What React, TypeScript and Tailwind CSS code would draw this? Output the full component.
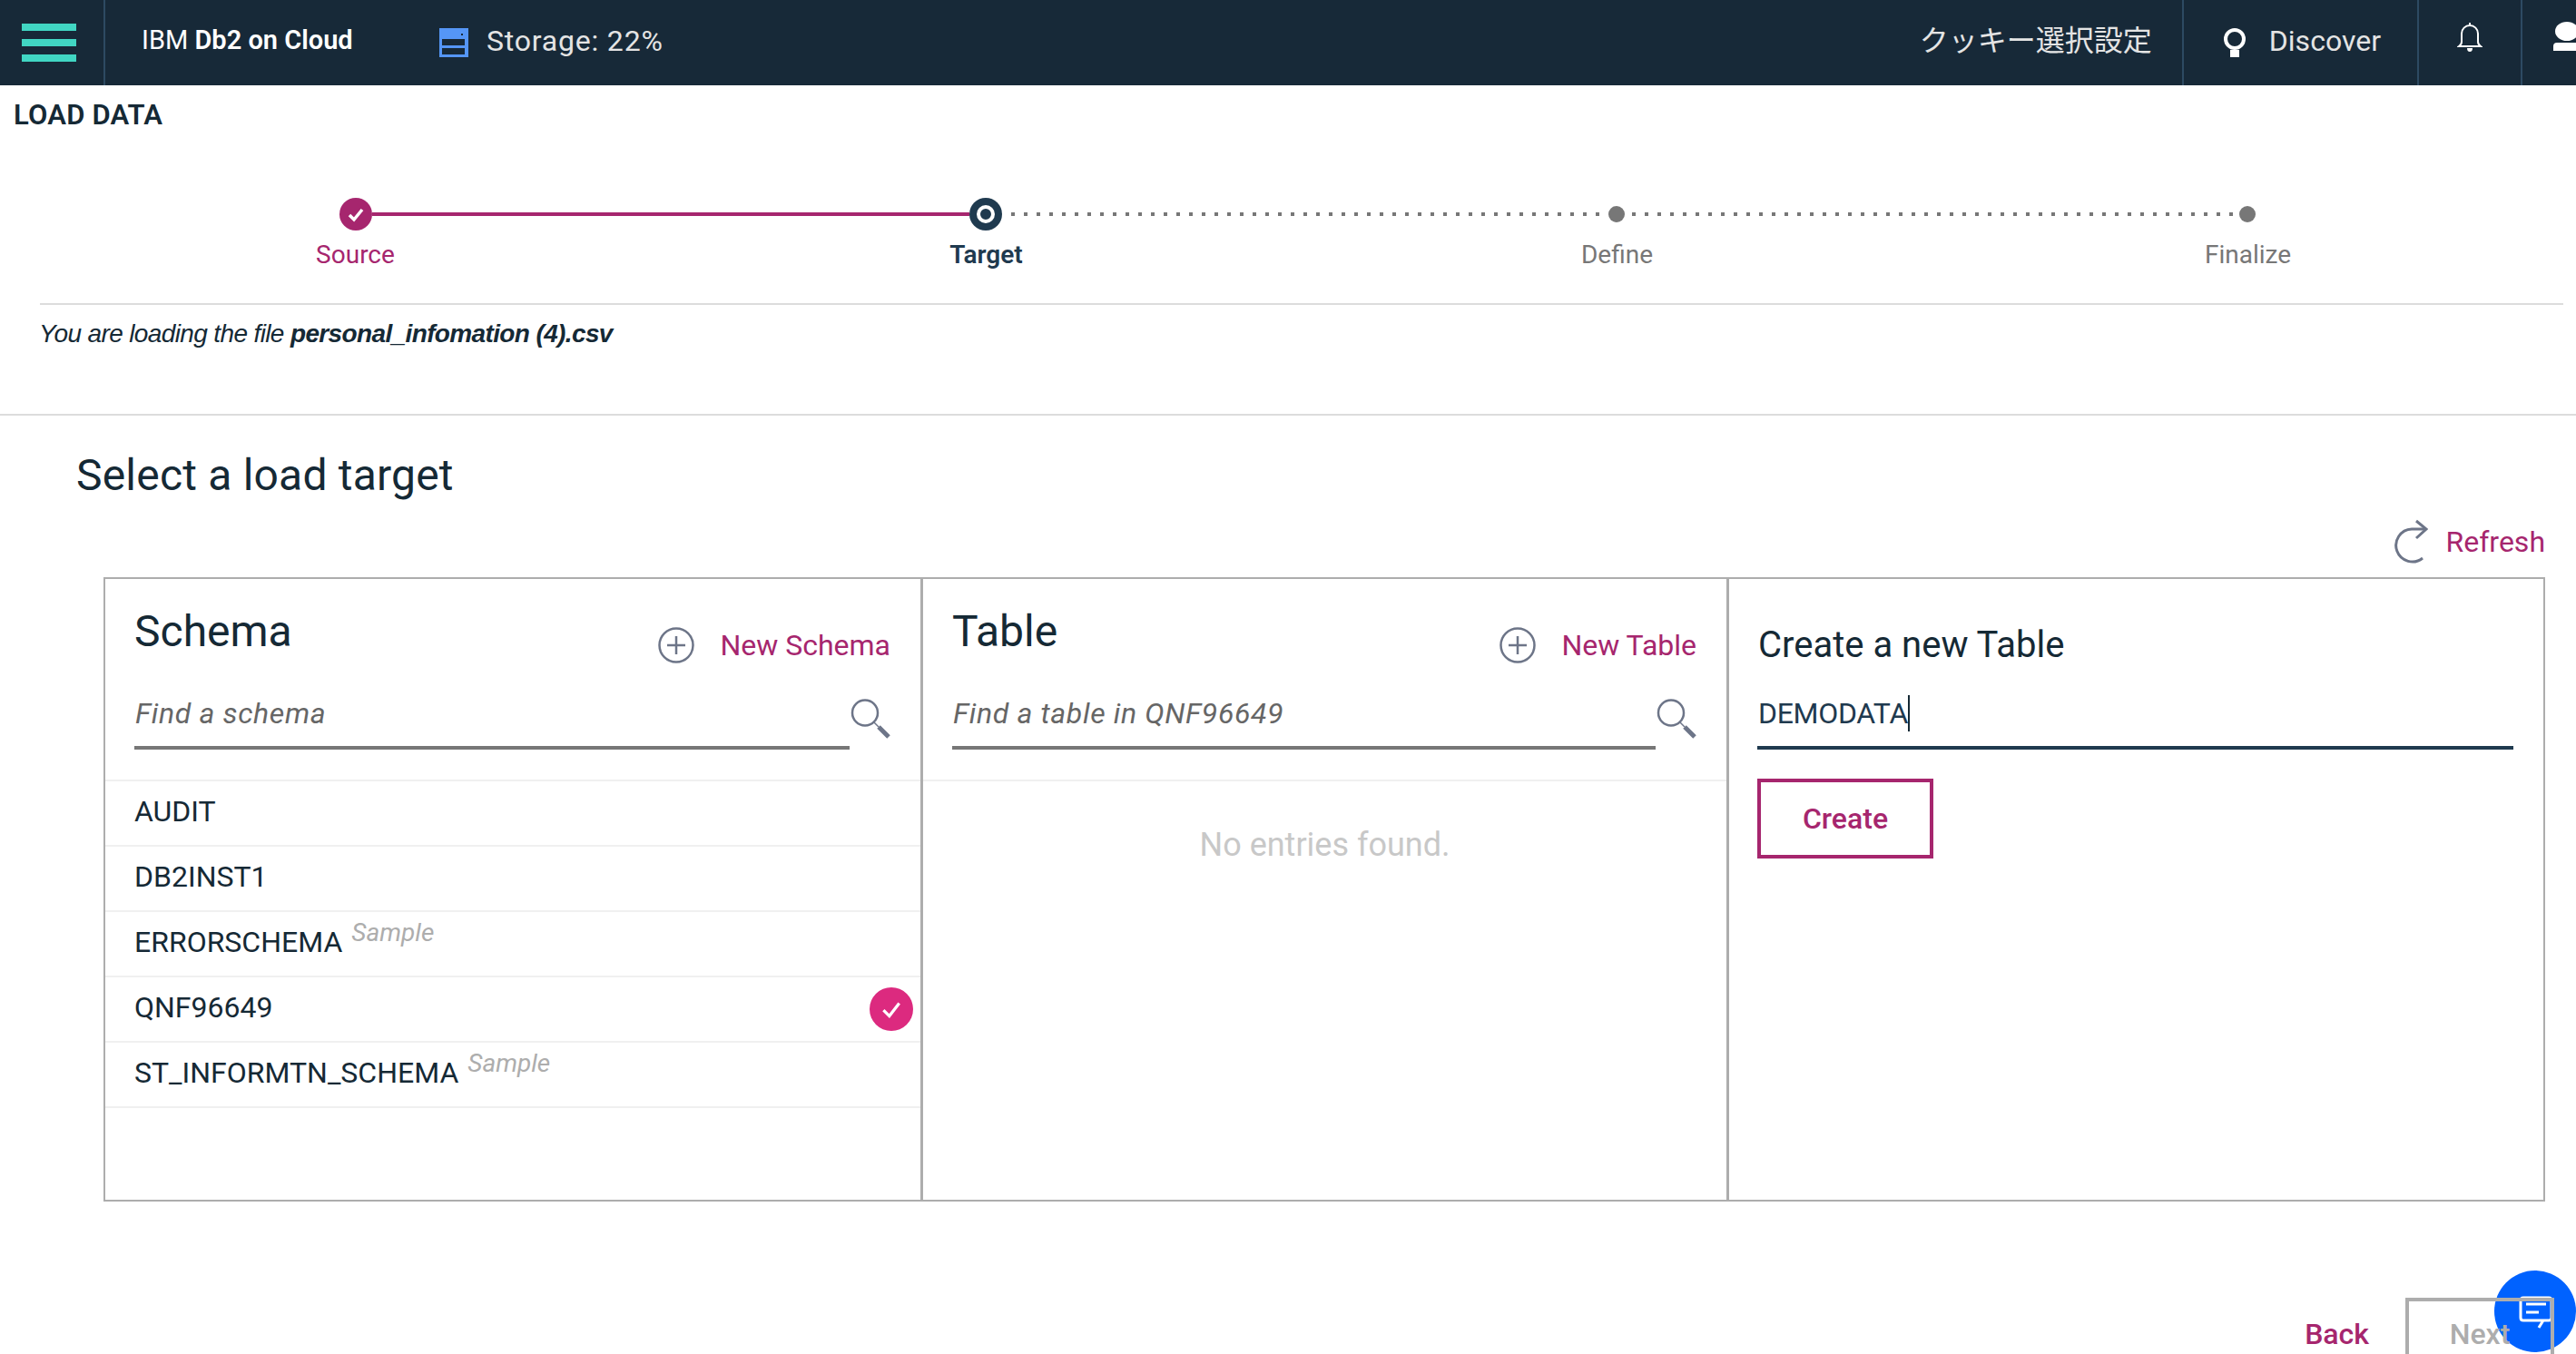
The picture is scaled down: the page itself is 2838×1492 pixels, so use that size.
import React from "react";

const plex = "font-['Roboto','Noto_Sans_CJK_JP',sans-serif]";

function PlusCircle() {
  return (
    <svg viewBox="0 0 40 40" className="w-[40px] h-[40px] shrink-0" fill="none" stroke="#6d7588" strokeWidth="2.5">
      <circle cx="20" cy="20" r="18.5" />
      <path d="M20 10v20M10 20h20" />
    </svg>
  );
}

function SearchIcon() {
  return (
    <svg viewBox="0 0 44 44" className="w-[44px] h-[44px] shrink-0" fill="none" stroke="#6d7588">
      <circle cx="16" cy="15.5" r="14" strokeWidth="2.5" />
      <path d="M26 26l5 5" strokeWidth="1.5" />
      <path d="M31 31l11 11" strokeWidth="5" />
    </svg>
  );
}

function Panel({ title, action, placeholder, children, className }: { title: string; action: string; placeholder: string; children: React.ReactNode; className: string }) {
  return (
    <div className={className}>
      <div className="h-[223px] pl-[32px] pr-[33px] pt-[28px] border-b-2 border-[#f0f0f0]">
        <div className="flex items-start justify-between">
          <div className="text-[48px] leading-[60px] text-[#152935]">{title}</div>
          <div className="flex items-center gap-[28px] mt-[21px] text-[32px] text-[#a6266e]">
            <PlusCircle />
            {action}
          </div>
        </div>
        <div className="flex items-start mt-[15px]">
          <input
            readOnly
            placeholder={placeholder}
            className="flex-1 min-w-0 h-[76px] pl-[1px] border-b-4 border-[#777] bg-transparent outline-none italic text-[32px] tracking-[0.65px] placeholder:text-[#666]"
          />
          <div className="ml-[1px] mt-[20px]">
            <SearchIcon />
          </div>
        </div>
      </div>
      {children}
    </div>
  );
}

const rows = [
  { name: "AUDIT" },
  { name: "DB2INST1" },
  { name: "ERRORSCHEMA", sample: true },
  { name: "QNF96649", checked: true },
  { name: "ST_INFORMTN_SCHEMA", sample: true },
];

export default function App() {
  return (
    <div className={`${plex} relative w-[2838px] h-[1492px] overflow-hidden bg-white text-[#152935]`}>
      <header className="flex items-center h-[94px] bg-[#172938] text-[#e4e4e4]">
        <div className="flex flex-col justify-center gap-[9px] w-[116px] h-full pl-[24px] border-r-2 border-[#2d4a62]">
          <span className="block w-[60px] h-[8px] bg-[#41d6c3]" />
          <span className="block w-[60px] h-[8px] bg-[#41d6c3]" />
          <span className="block w-[60px] h-[8px] bg-[#41d6c3]" />
        </div>
        <div className="ml-[40px] w-[328px] text-[29px] text-white -translate-y-[2px]">
          IBM <span className="font-semibold">Db2 on Cloud</span>
        </div>
        <svg viewBox="0 0 32 32" className="w-[32px] h-[32px]">
          <rect width="32" height="32" fill="#5596f6" />
          <rect x="3" y="12" width="25" height="7" fill="#172938" />
          <rect x="3" y="22" width="25" height="7" fill="#172938" />
          <rect x="24" y="6" width="2" height="2" fill="#172938" />
        </svg>
        <div className="ml-[20px] text-[32px] tracking-[0.8px] -translate-y-[2px]">Storage: 22%</div>
        <div className="ml-auto text-[32px] -translate-y-[2px]">クッキー選択設定</div>
        <div className="flex items-center h-full ml-[33px] pl-[44px] pr-[40px] border-l-2 border-[#2d4a62]">
          <svg viewBox="0 0 24 32" className="w-[24px] h-[32px] mr-[26px]">
            <circle cx="12" cy="12" r="10" fill="none" stroke="#fff" strokeWidth="4" />
            <rect x="7" y="24" width="10" height="8" fill="#fff" />
          </svg>
          <span className="text-[32px] -translate-y-[2px]">Discover</span>
        </div>
        <div className="flex items-center justify-center h-full w-[114px] border-l-2 border-[#2d4a62]">
          <svg viewBox="0 0 28 34" className="w-[28px] h-[34px] -translate-y-[6px]" fill="none" stroke="#fff" strokeWidth="2">
            <path d="M14 1v3M5 22V13a9 9 0 0 1 18 0v9q0 3 3 5H2q3-2 3-5z" />
            <path d="M11 29h6q0 4-3 4t-3-4z" fill="#fff" stroke="none" />
          </svg>
        </div>
        <div className="flex items-start h-full w-[61px] pl-[34px] pt-[24px] border-l-2 border-[#2d4a62] overflow-hidden">
          <svg viewBox="0 0 32 32" className="w-[32px] h-[32px] shrink-0" fill="#fff">
            <ellipse cx="15" cy="10.5" rx="13" ry="10.5" />
            <path d="M0 32v-5q0-4 4-4h24q4 0 4 4v5z" />
          </svg>
        </div>
      </header>

      <h1 className="pl-[15px] pt-[15px] text-[31px] leading-[36px] font-semibold tracking-[0.2px]">LOAD DATA</h1>

      <div className="pl-[44px] pr-[14px] mt-[73px]">
        <div className="flex items-center pl-[330px] h-[36px]">
          <div className="flex items-center justify-center w-[36px] h-[36px] rounded-full bg-[#a6266e] shrink-0">
            <svg viewBox="0 0 20 20" className="w-[20px] h-[20px]" fill="none" stroke="#fff" strokeWidth="3.5">
              <path d="M3 11l5 5 9-11" />
            </svg>
          </div>
          <div className="w-[658px] h-[4px] bg-[#a6266e] shrink-0" />
          <div className="flex items-center justify-center w-[36px] h-[36px] rounded-full bg-[#1f3a4f] shrink-0">
            <span className="block w-[20px] h-[20px] rounded-full border-[4px] border-white bg-[#1f3a4f]" />
          </div>
          <div className="w-[648px] h-[4px] ml-[10px] mr-[10px] shrink-0 bg-[repeating-linear-gradient(90deg,#777_0_4px,transparent_4px_14px)]" />
          <span className="w-[18px] h-[18px] rounded-full bg-[#777] shrink-0" />
          <div className="w-[663px] h-[4px] ml-[8px] mr-[6px] shrink-0 bg-[repeating-linear-gradient(90deg,#777_0_4px,transparent_4px_14px)]" />
          <span className="w-[18px] h-[18px] rounded-full bg-[#777] shrink-0" />
        </div>
        <div className="grid grid-cols-4 mt-[7px] text-[28px] leading-[40px] text-center">
          <span className="text-[#a6266e]">Source</span>
          <span className="font-semibold text-[#1f3a4f]">Target</span>
          <span className="text-[#777]">Define</span>
          <span className="text-[#777]">Finalize</span>
        </div>
        <div className="h-[2px] bg-[#dcdcdc] mt-[33px]" />
        <p className="mt-[14px] -ml-[1px] font-['Liberation_Sans',sans-serif] italic text-[28px] leading-[36px] tracking-[-0.63px]">
          You are loading the file <b>personal_infomation (4).csv</b>
        </p>
      </div>

      <div className="h-[2px] bg-[#dcdcdc] mt-[70px]" />
      <h2 className="pl-[84px] mt-[36px] text-[48px] leading-[60px] tracking-[0.2px]">Select a load target</h2>

      <div className="flex items-center justify-end pr-[34px] h-[50px] mt-[18px] text-[32px] text-[#a6266e]">
        <svg viewBox="0 0 38 50" className="w-[38px] h-[50px] mr-[20px]" fill="none" stroke="#6d7588" strokeWidth="3">
          <path d="M36 11H20A18 18 0 1 0 32 43" />
          <path d="M25 2l11 9-11 10" />
        </svg>
        Refresh
      </div>

      <div className="flex ml-[114px] w-[2690px] h-[688px] mt-[14px] border-2 border-[#adadad]">
        <Panel title="Schema" action="New Schema" placeholder="Find a schema" className="w-[901px] border-r-[3px] border-[#adadad]">
          <div className="text-[32px]">
            {rows.map((r) => (
              <div key={r.name} className="flex items-center h-[72px] pl-[32px] pr-[8px] border-b-2 border-[#f0f0f0]">
                <span className="-translate-y-[2px]">{r.name}</span>
                {r.sample && <span className="ml-[10px] -translate-y-[12px] italic text-[28px] text-[#adadad]">Sample</span>}
                {r.checked && (
                  <span className="ml-auto flex items-center justify-center w-[48px] h-[48px] rounded-full bg-[#dc2a7f]">
                    <svg viewBox="0 0 24 24" className="w-[26px] h-[26px]" fill="none" stroke="#fff" strokeWidth="3">
                      <path d="M4 13l6 6L20 6" />
                    </svg>
                  </span>
                )}
              </div>
            ))}
          </div>
        </Panel>
        <Panel title="Table" action="New Table" placeholder="Find a table in QNF96649" className="w-[888px] border-r-[3px] border-[#adadad]">
          <div className="pt-[43px] text-center text-[36px] text-[#c8c8c8]">No entries found.</div>
        </Panel>
        <div className="flex-1 pl-[31px] pr-[33px] pt-[43px]">
          <div className="text-[40px] leading-[60px] pl-[1px]">Create a new Table</div>
          <div className="flex items-center h-[76px] mt-[9px] pl-[1px] border-b-4 border-[#1f3a4f] text-[32px] tracking-[-0.3px] text-[#1f3a4f]">
            DEMODATA
            <span className="block w-[2px] h-[40px] bg-[#152935]" />
          </div>
          <button className="block w-[194px] h-[88px] mt-[32px] border-4 border-[#a6266e] text-[32px] font-medium text-[#a6266e]">Create</button>
        </div>
      </div>

      <div className="absolute right-0 top-[1400px] w-[90px] h-[90px] rounded-full bg-[#0062ff]">
        <svg viewBox="0 0 38 36" className="absolute left-[27px] top-[28px] w-[38px] h-[36px]" fill="none" stroke="#fff" strokeWidth="3">
          <path d="M27 27H5q-3 0-3-3V5q0-3 3-3h28q3 0 3 3v19q0 3-3 3h-6l-5 8" />
          <path d="M8 9h22M8 18h14" />
        </svg>
      </div>

      <div className="relative flex items-center justify-end h-[80px] mt-[106px] pr-[24px] text-[32px] font-medium">
        <span className="mr-[40px] text-[#a6266e]">Back</span>
        <div className="flex items-center justify-center w-[164px] h-[80px] border-4 border-[#adadad] text-[#adadad]">Next</div>
      </div>
    </div>
  );
}
